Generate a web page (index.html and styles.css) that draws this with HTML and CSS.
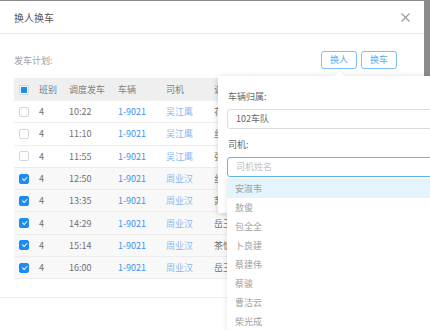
FILE: index.html
```html
<!DOCTYPE html>
<html lang="zh-CN">
<head>
    <meta charset="UTF-8">
    <title>换人换车</title>
    <link rel="stylesheet" href="styles.css">
</head>
<body>
    <!-- 弹窗 -->
    <div class="dialog">
        <div class="dialog-header">
            <span class="dialog-title">换人换车</span>
            <svg class="close" width="9" height="9" viewBox="0 0 9 9"><path d="M0.5 0.5L8.5 8.5M8.5 0.5L0.5 8.5" stroke="#9a9a9a" stroke-width="1.1" fill="none"/></svg>
        </div>

        <div class="dialog-body">
            <div class="toolbar">
                <span class="toolbar-label">发车计划:</span>
                <div class="toolbar-btns">
                    <button class="btn">换人</button>
                    <button class="btn">换车</button>
                </div>
            </div>

            <table class="plan">
                <colgroup>
                    <col style="width:20px"><col style="width:30px"><col style="width:49px">
                    <col style="width:48px"><col style="width:48px"><col>
                </colgroup>
                <thead>
                    <tr>
                        <th><span class="chk half"></span></th>
                        <th>班别</th>
                        <th>调度发车</th>
                        <th>车辆</th>
                        <th>司机</th>
                        <th>调度员</th>
                    </tr>
                </thead>
                <tbody>
                    <tr><td><span class="chk"></span></td><td>4</td><td>10:22</td><td class="car">1-9021</td><td class="drv">吴江鹰</td><td>花卫平</td></tr>
                    <tr><td><span class="chk"></span></td><td>4</td><td>11:10</td><td class="car">1-9021</td><td class="drv">吴江鹰</td><td>丝光明</td></tr>
                    <tr><td><span class="chk"></span></td><td>4</td><td>11:55</td><td class="car">1-9021</td><td class="drv">吴江鹰</td><td>张国华</td></tr>
                    <tr class="sel"><td><span class="chk on"></span></td><td>4</td><td>12:50</td><td class="car">1-9021</td><td class="drv">周业汉</td><td>丝光明</td></tr>
                    <tr class="sel"><td><span class="chk on"></span></td><td>4</td><td>13:35</td><td class="car">1-9021</td><td class="drv">周业汉</td><td>苏建平</td></tr>
                    <tr class="sel"><td><span class="chk on"></span></td><td>4</td><td>14:29</td><td class="car">1-9021</td><td class="drv">周业汉</td><td>岳王华</td></tr>
                    <tr class="sel"><td><span class="chk on"></span></td><td>4</td><td>15:14</td><td class="car">1-9021</td><td class="drv">周业汉</td><td>茶忻</td></tr>
                    <tr class="sel"><td><span class="chk on"></span></td><td>4</td><td>16:00</td><td class="car">1-9021</td><td class="drv">周业汉</td><td>岳王华</td></tr>
                </tbody>
            </table>
        </div>

        <div class="dialog-footer"></div>

        <!-- 换人弹出框 -->
        <div class="popover">
            <span class="arrow"></span>
            <div class="field-label">车辆归属:</div>
            <div class="input">102车队</div>
            <div class="field-label">司机:</div>
            <div class="input focus"><span class="placeholder">司机姓名</span></div>

            <ul class="suggest">
                <li class="active">安淑韦</li>
                <li>敖俊</li>
                <li>包全全</li>
                <li>卜良建</li>
                <li>蔡建伟</li>
                <li>蔡骏</li>
                <li>曹洁云</li>
                <li>柴光成</li>
            </ul>
        </div>
    </div>
</body>
</html>
```

FILE: styles.css
```css
/* 基础 */
html, body { margin: 0; height: 100%; overflow: hidden; }
body { background: #8b8b8b; font-family: "Noto Sans CJK SC", "Liberation Sans", sans-serif; font-size: 9px; color: #666; }

/* 弹窗 */
.dialog { position: relative; width: 424px; height: 340px; margin-top: 1px; background: #fff; }
.dialog-header { height: 32px; padding: 0 14px; display: flex; align-items: center; justify-content: space-between; border-bottom: 1px solid #e9e9e9; }
.dialog-title { font-size: 10px; color: #555; }
.close { display: block; }

.dialog-body { height: 246px; padding: 17px 14px 0; }
.toolbar { height: 18px; display: flex; align-items: center; justify-content: space-between; padding-right: 13px; }
.toolbar-label { color: #a0a0a0; }
.toolbar-btns { display: flex; gap: 4px; }
.btn { width: 36px; height: 18px; padding: 0; border: 1px solid #7dbdf6; border-radius: 3px; background: #fff; color: #62a8ee; font-family: inherit; font-size: 9px; line-height: 16px; }

/* 表格 */
.plan { width: 396px; margin-top: 9px; border-collapse: collapse; table-layout: fixed; }
.plan th, .plan td { padding: 0 0 0 5px; text-align: left; white-space: nowrap; overflow: hidden; font-weight: normal; }
.plan th { height: 23px; background: #efefef; color: #808080; }
.plan td { height: 21.3px; border-bottom: 1px solid #ececec; color: #707070; }
.plan tr.sel td { background: #f8f8f8; }
.plan td.car { color: #3d93ec; }
.plan td.drv { color: #86baf2; }

.chk { display: block; position: relative; width: 8px; height: 8px; border: 1px solid #d6d6d6; border-radius: 2px; background: #fff; }
.chk.half::after { content: ""; position: absolute; left: 1px; top: 1px; width: 6px; height: 6px; background: #1c8cf5; }
.chk.on { background: #1c8cf5; border-color: #1c8cf5; }
.chk.on::after { content: ""; position: absolute; top: 4px; left: 1.5px; width: 4px; height: 2px; border-left: 1.3px solid #fff; border-bottom: 1.3px solid #fff; transform: rotate(-45deg); transform-origin: left top; }

.dialog-footer { border-top: 1px solid #eeeeee; }

/* 弹出框 */
.popover { position: absolute; left: 218px; top: 75px; width: 230px; height: 137px; padding: 0 0 0 9px; box-sizing: border-box; background: #fff; box-shadow: 0 1px 6px rgba(0, 0, 0, 0.18); }
.arrow { position: absolute; left: 118px; top: -4px; width: 7px; height: 7px; background: #fff; transform: rotate(45deg); box-shadow: -1px -1px 2px rgba(0, 0, 0, 0.06); }
.field-label { height: 14px; line-height: 14px; margin: 14px 0 5px 1px; color: #666; }
.field-label:nth-of-type(3) { margin-top: 9px; }
.input { height: 18px; line-height: 18px; border: 1px solid #dcdcdc; border-radius: 3px; padding-left: 8px; color: #666; }
.input.focus { border-color: #5fb4f5; }
.placeholder { color: #c2c2c2; }

.suggest { position: absolute; left: 9px; top: 103px; width: 230px; margin: 0; padding: 0; list-style: none; background: #fff; box-shadow: 0 1px 5px rgba(0, 0, 0, 0.12); }
.suggest li { height: 19px; line-height: 19px; padding-left: 8px; color: #a0a0a0; }
.suggest li.active { background: #e3f4fd; }
```
